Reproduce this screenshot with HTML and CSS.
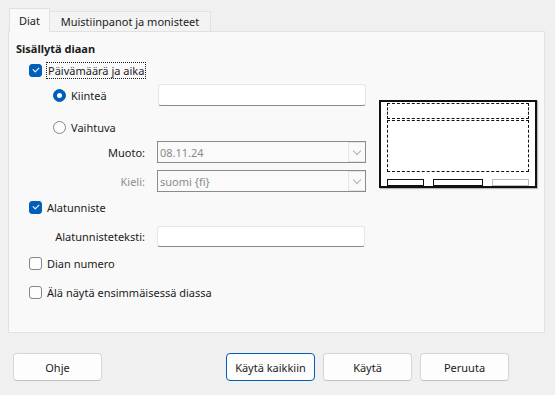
FILE: index.html
```html
<!DOCTYPE html>
<html lang="fi">
<head>
    <meta charset="UTF-8">
    <title>Ylä- ja alatunniste</title>
    <link rel="stylesheet" href="styles.css">
</head>
<body>
    <div class="dialog">
        <div class="tabs">
            <div class="tab active">Diat</div>
            <div class="tab tab-notes">Muistiinpanot ja monisteet</div>
        </div>
        <div class="panel">
            <div class="form">
                <div class="heading">Sisällytä diaan</div>

                <div class="row row-check r-date">
                    <span class="check checked"></span>
                    <span class="focus">Päivämäärä ja aika</span>
                </div>

                <div class="row row-radio r-fixed">
                    <div class="radio-label">
                        <span class="radio checked"></span>
                        <span>Kiinteä</span>
                    </div>
                    <div class="entry"></div>
                </div>

                <div class="row row-radio r-var">
                    <div class="radio-label">
                        <span class="radio"></span>
                        <span>Vaihtuva</span>
                    </div>
                </div>

                <div class="row row-field r-format">
                    <label class="field-label">Muoto:</label>
                    <div class="select"><span>08.11.24</span><span class="chev"></span></div>
                </div>

                <div class="row row-field r-lang">
                    <label class="field-label disabled">Kieli:</label>
                    <div class="select"><span>suomi {fi}</span><span class="chev"></span></div>
                </div>

                <div class="row row-check r-footer">
                    <span class="check checked"></span>
                    <span>Alatunniste</span>
                </div>

                <div class="row row-field r-ftext">
                    <label class="field-label">Alatunnisteteksti:</label>
                    <div class="entry"></div>
                </div>

                <div class="row row-check r-num">
                    <span class="check"></span>
                    <span>Dian numero</span>
                </div>

                <div class="row row-check r-first">
                    <span class="check"></span>
                    <span>Älä näytä ensimmäisessä diassa</span>
                </div>
            </div>

            <div class="preview">
                <div class="pv-head"></div>
                <div class="pv-body"></div>
                <div class="pv-foot">
                    <span class="pv-date"></span>
                    <span class="pv-text"></span>
                    <span class="pv-num"></span>
                </div>
            </div>
        </div>

        <div class="buttons">
            <button class="btn">Ohje</button>
            <div class="spacer"></div>
            <button class="btn default">Käytä kaikkiin</button>
            <button class="btn">Käytä</button>
            <button class="btn">Peruuta</button>
        </div>
    </div>
</body>
</html>
```

FILE: styles.css
```css
* {
    margin: 0;
    padding: 0;
    box-sizing: border-box;
}

body {
    font-family: "Segoe UI", "Noto Sans", sans-serif;
    font-size: 11px;
    color: #1b1b1b;
    background: #f0f0f0;
    width: 555px;
    height: 395px;
    overflow: hidden;
}

.dialog {
    padding: 8px 10px 0 8px;
}

/* tabs */
.tabs {
    display: flex;
    align-items: flex-end;
    padding-left: 1px;
    height: 23px;
    position: relative;
    z-index: 1;
}

.tab {
    height: 20px;
    border: 1px solid #e1e1e1;
    border-bottom: none;
    background: #f3f3f3;
    line-height: 20px;
    text-align: center;
    color: #1b1b1b;
}

.tab.active {
    width: 41px;
    height: 24px;
    margin-bottom: -1px;
    background: #f9f9f9;
    line-height: 24px;
}

.tab-notes {
    width: 161px;
    border-left: none;
}

/* panel */
.panel {
    height: 302px;
    background: #f9f9f9;
    border: 1px solid #e1e1e1;
    display: flex;
}

.form {
    width: 357px;
    padding-top: 9px;
    padding-left: 7px;
}

.heading {
    font-weight: 700;
    height: 16px;
    line-height: 16px;
}

.row {
    display: flex;
    align-items: center;
}

.row-check {
    height: 16px;
    padding-left: 13px;
    gap: 5px;
}

.row-radio {
    height: 22px;
    padding-left: 37px;
}

.row-field {
    height: 22px;
    padding-left: 25px;
}

.r-date { margin-top: 5px; }
.r-fixed { margin-top: 6px; }
.r-var { margin-top: 10px; }
.r-format { margin-top: 3px; }
.r-lang { margin-top: 7px; }
.r-footer { margin-top: 7px; }
.r-ftext { margin-top: 11px; height: 21px; }
.r-num { margin-top: 8px; }
.r-first { margin-top: 13px; }

.focus {
    outline: 1px dotted #1b1b1b;
    outline-offset: 0;
    padding: 0 1px;
}

.check {
    width: 13px;
    height: 13px;
    border: 1px solid #858585;
    border-radius: 3px;
    background: #fdfdfd;
    position: relative;
    flex-shrink: 0;
}

.check.checked {
    background: #005fb8;
    border-color: #005fb8;
}

.check.checked::after {
    content: '';
    position: absolute;
    left: 3px;
    top: 2px;
    width: 5px;
    height: 3px;
    border-left: 1px solid #fff;
    border-bottom: 1px solid #fff;
    transform: rotate(-45deg);
}

.radio-label {
    display: flex;
    align-items: center;
    gap: 5px;
    width: 105px;
}

.radio {
    width: 13px;
    height: 13px;
    border: 1px solid #858585;
    border-radius: 50%;
    background: #fdfdfd;
    position: relative;
    flex-shrink: 0;
}

.radio.checked {
    background: #005fb8;
    border-color: #005fb8;
}

.radio.checked::after {
    content: '';
    position: absolute;
    left: 3px;
    top: 3px;
    width: 5px;
    height: 5px;
    border-radius: 50%;
    background: #fff;
}

.field-label {
    width: 104px;
    text-align: right;
    margin-right: 12px;
}

.field-label.disabled {
    color: #8d8d8d;
}

.entry {
    width: 208px;
    height: 100%;
    background: #fff;
    border: 1px solid #e5e5e5;
    border-bottom-color: #8a8a8a;
    border-radius: 3px;
}

.select {
    width: 209px;
    height: 100%;
    border: 1px solid #8b8b8b;
    background: #fafafa;
    display: flex;
    align-items: center;
    justify-content: space-between;
    padding-left: 2px;
    color: #8a8a8a;
}

.chev {
    width: 17px;
    height: 20px;
    border: 1px solid #e6e6e6;
    border-right: none;
    position: relative;
}

.chev::after {
    content: '';
    position: absolute;
    left: 5px;
    top: 5px;
    width: 5px;
    height: 5px;
    border-right: 1px solid #b0b0b0;
    border-bottom: 1px solid #b0b0b0;
    transform: rotate(45deg);
}

/* preview */
.preview {
    margin-left: 13px;
    margin-top: 68px;
    width: 158px;
    height: 88px;
    background: #fff;
    border: 2px solid #111;
    box-shadow: 1px 1px 1px rgba(0, 0, 0, 0.25);
    padding: 1px 6px 0 6px;
    display: flex;
    flex-direction: column;
}

.pv-head {
    height: 16px;
    border: 1px dashed #111;
}

.pv-body {
    height: 52px;
    margin-top: 1px;
    border: 1px dashed #111;
}

.pv-foot {
    display: flex;
    justify-content: space-between;
    margin-top: 7px;
}

.pv-foot span {
    height: 7px;
    border: 1px solid #111;
}

.pv-date { width: 37px; }
.pv-text { width: 50px; }
.pv-num { width: 37px; border-color: #bdbdbd !important; }

/* buttons */
.buttons {
    display: flex;
    gap: 8px;
    padding: 20px 36px 0 5px;
}

.spacer {
    flex: 1;
}

.btn {
    width: 89px;
    height: 28px;
    font-family: inherit;
    font-size: 11px;
    color: #1b1b1b;
    background: #fdfdfd;
    border: 1px solid #d6d6d6;
    border-bottom-color: #c2c2c2;
    border-radius: 4px;
}

.btn.default {
    border-color: #005fb8;
}
```
